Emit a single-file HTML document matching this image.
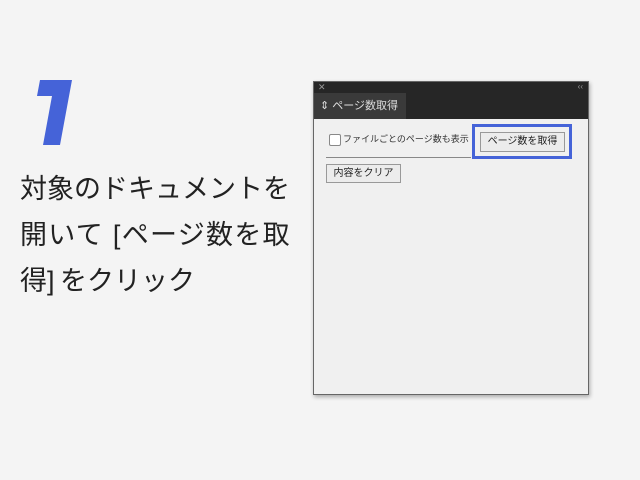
<html><head><style>
body{margin:0;width:640px;height:480px;background:#f4f4f4;position:relative;overflow:hidden;font-family:"Liberation Sans","Noto Sans CJK JP",sans-serif}
.t{position:absolute;left:20px;font-size:27px;color:#222;letter-spacing:0;white-space:nowrap}
.p{position:absolute;left:313px;top:81px;width:274px;height:312px;background:#f0f0f0;border:1px solid #666;box-shadow:1px 2px 4px rgba(0,0,0,.3)}
.btn{position:absolute;background:#ececec;border:1px solid #999;font-size:10px;color:#222;text-align:center;box-sizing:border-box}
</style></head><body>
<svg style="position:absolute;left:0;top:0" width="100" height="150"><polygon points="40,80 72,80 60,145 43,145 52,96 37,96" fill="#4563d8"/></svg>
<div class="t" style="top:167px">対象のドキュメントを</div>
<div class="t" style="top:213px;letter-spacing:1.3px">開いて [ページ数を取</div>
<div class="t" style="top:259px">得]<span style="margin-left:-2px"> </span>をクリック</div>
<div class="p">
<div style="position:absolute;left:0;top:0;width:274px;height:37px;background:#262626"></div>
<div style="position:absolute;left:4px;top:0;color:#999;font-size:9px">✕</div>
<div style="position:absolute;right:5px;top:0;color:#999;font-size:8px">‹‹</div>
<div style="position:absolute;left:0;top:11px;width:92px;height:26px;background:#3a3a3a;color:#ddd;font-size:11px;line-height:26px;padding-left:6px;box-sizing:border-box">⇕ ページ数取得</div>
<div style="position:absolute;left:15px;top:52px;width:10px;height:10px;border:1px solid #888;background:#fff;border-radius:2px"></div>
<div style="position:absolute;left:29px;top:50px;font-size:9px;color:#333">ファイルごとのページ数も表示</div>
<div style="position:absolute;left:12px;top:75px;width:145px;height:1px;background:#888"></div>
<div style="position:absolute;left:158px;top:42px;width:100px;height:35px;border:3px solid #4563d8;box-sizing:border-box"></div>
<div class="btn" style="left:166px;top:50px;width:85px;height:20px;line-height:18px">ページ数を取得</div>
<div class="btn" style="left:12px;top:82px;width:75px;height:19px;line-height:17px">内容をクリア</div>
</div>
</body></html>
